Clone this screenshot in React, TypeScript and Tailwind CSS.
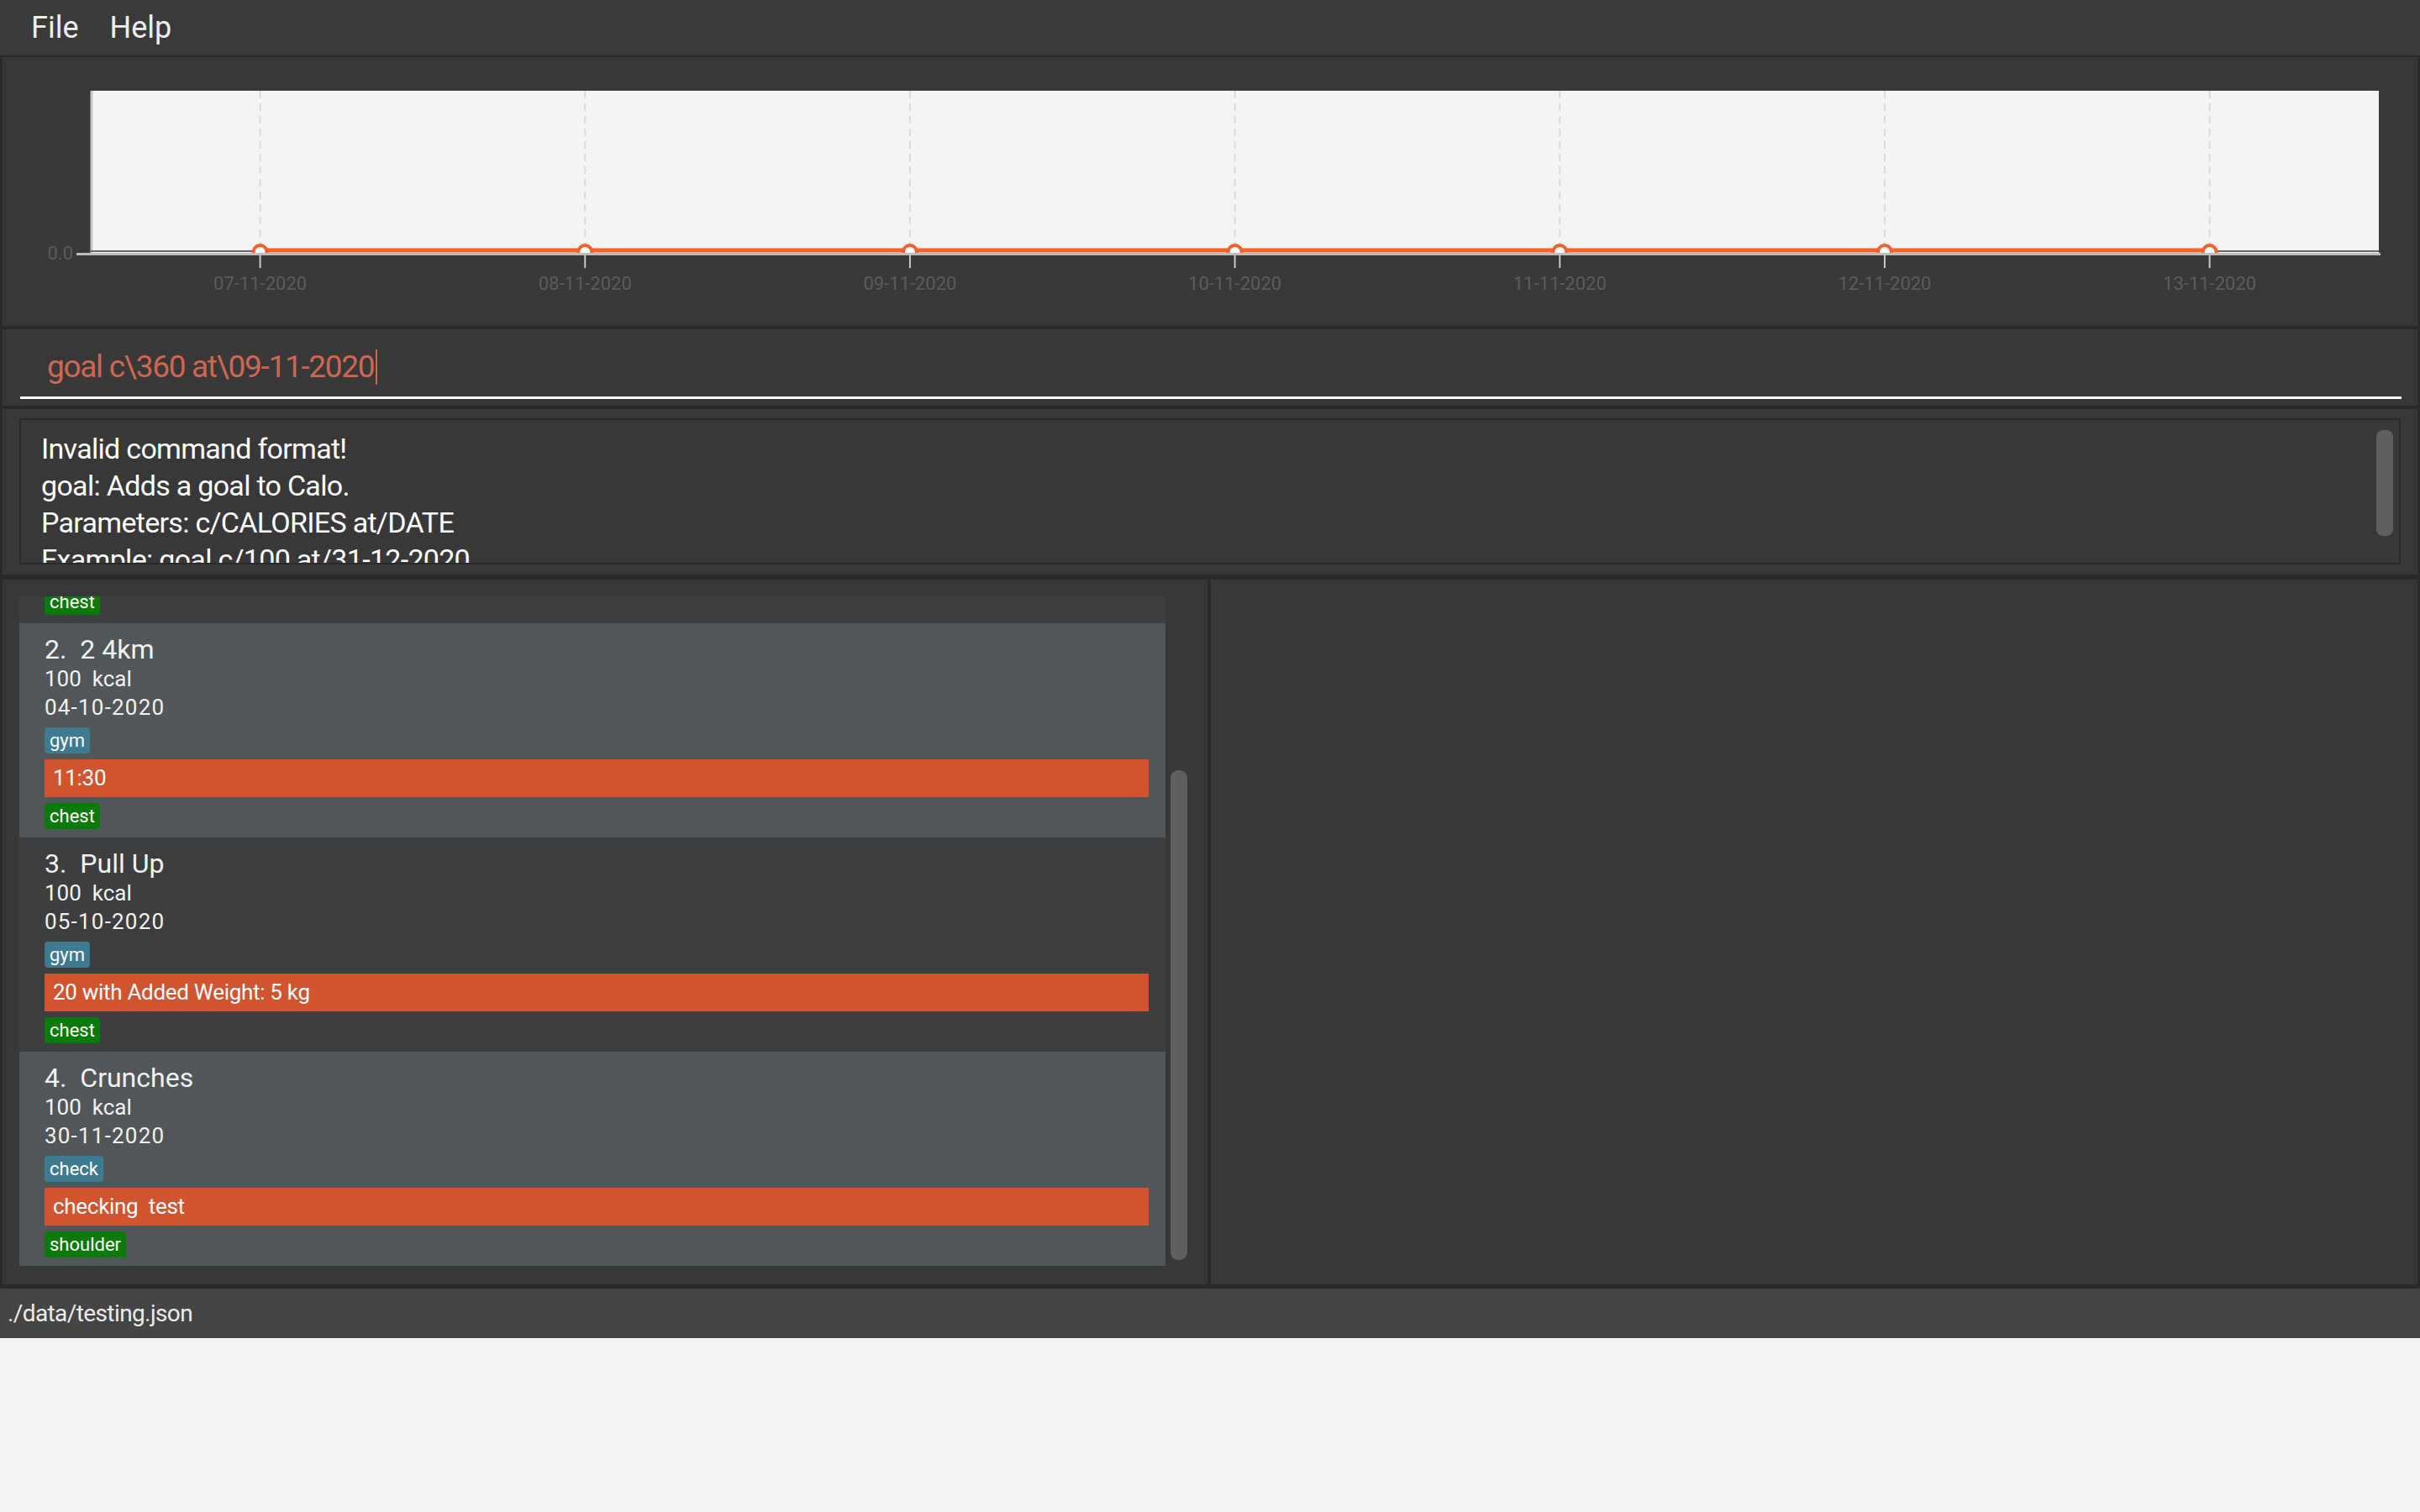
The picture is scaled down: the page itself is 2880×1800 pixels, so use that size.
import React from "react";

const FONT = { fontFamily: "Roboto, 'Noto Sans', 'Liberation Sans', sans-serif" };

type Item = {
  n: number;
  name: string;
  date: string;
  tag1: string;
  bar: string;
  tag2: string;
};

const items: Item[] = [
  { n: 1, name: "Bench Press", date: "03-10-2020", tag1: "gym", bar: "10:00", tag2: "chest" },
  { n: 2, name: "2 4km", date: "04-10-2020", tag1: "gym", bar: "11:30", tag2: "chest" },
  { n: 3, name: "Pull Up", date: "05-10-2020", tag1: "gym", bar: "20 with Added Weight: 5 kg", tag2: "chest" },
  { n: 4, name: "Crunches", date: "30-11-2020", tag1: "check", bar: "checking\u00a0\u00a0test", tag2: "shoulder" },
];

function Card({ item, even, first }: { item: Item; even: boolean; first?: boolean }) {
  return (
    <div
      className={`${even ? "bg-[#515658]" : "bg-[#3c3e3f]"} ${first ? "mt-[-223px]" : ""} h-[255px] shrink-0 pl-[30px] pr-[20px] pt-[13px] pb-[10px] flex flex-col text-[#f2f2f2]`}
    >
      <div className="text-[32px] leading-[36px] whitespace-pre">{`${item.n}.  ${item.name}`}</div>
      <div className="text-[26px] leading-[34px] whitespace-pre">{"100  kcal"}</div>
      <div className="text-[26px] leading-[34px] tracking-[1.2px]">{item.date}</div>
      <div className="mt-[7px] flex">
        <span className="bg-[#3e7b91] text-white text-[22px] leading-[27px] px-[6px] py-[2px] rounded-[4px]">{item.tag1}</span>
      </div>
      <div className="mt-[7px] h-[45px] bg-[#d0552f] flex items-center pl-[10px] text-[26px] tracking-[-0.3px] text-white whitespace-pre">
        {item.bar}
      </div>
      <div className="mt-[7px] flex">
        <span className="bg-[#0a7a0a] text-white text-[22px] leading-[27px] px-[6px] py-[2px] rounded-[4px]">{item.tag2}</span>
      </div>
    </div>
  );
}

function Chart() {
  const ticks = ["07-11-2020", "08-11-2020", "09-11-2020", "10-11-2020", "11-11-2020", "12-11-2020", "13-11-2020"];
  const x0 = 306.6;
  const step = 386.67;
  const xs = ticks.map((_, i) => x0 + i * step);
  return (
    <svg width="2874" height="320" viewBox="0 0 2874 320" className="block" style={FONT}>
      <defs>
        <clipPath id="plotclip">
          <rect x="105" y="40" width="2723" height="193" />
        </clipPath>
      </defs>
      <rect x="105" y="40" width="2723" height="194" fill="#f4f4f4" />
      {xs.map((x, i) => (
        <line key={`g${i}`} x1={x} y1="40" x2={x} y2="232" stroke="#d9d9d9" strokeWidth="2" strokeDasharray="9 6" />
      ))}
      <line x1="106" y1="40" x2="106" y2="234" stroke="#c8c8c8" strokeWidth="3" />
      <line x1="105" y1="231" x2="2828" y2="231" stroke="#6a6a6a" strokeWidth="2" />
      <line x1="88" y1="234.5" x2="2830" y2="234.5" stroke="#bdbdbd" strokeWidth="3" />
      <g clipPath="url(#plotclip)">
        <line x1={xs[0]} y1="230" x2={xs[6]} y2="230" stroke="#f3622d" strokeWidth="5" />
        {xs.map((x, i) => (
          <circle key={`c${i}`} cx={x} cy="232" r="8" fill="#ffffff" stroke="#f3622d" strokeWidth="4" />
        ))}
      </g>
      {xs.map((x, i) => (
        <line key={`t${i}`} x1={x} y1="236" x2={x} y2="251" stroke="#c8c8c8" strokeWidth="2" />
      ))}
      {xs.map((x, i) => (
        <text key={`l${i}`} x={x} y="277" fill="#5c5c5c" fontSize="22" textAnchor="middle">
          {ticks[i]}
        </text>
      ))}
      <text x="84" y="241" fill="#5c5c5c" fontSize="22" textAnchor="end">
        0.0
      </text>
    </svg>
  );
}

export default function App() {
  return (
    <div className="w-[2880px] h-[1800px] bg-[#f4f4f4] flex flex-col overflow-hidden" style={FONT}>
      {/* menu bar */}
      <div className="h-[66px] shrink-0 bg-[#3a3a3a] flex items-center pl-[37px] gap-[37px] text-[36px] text-[#eeeeee]">
        <span>File</span>
        <span>Help</span>
      </div>

      {/* main */}
      <div className="h-[1468px] shrink-0 bg-[#2a2a2a] pt-[2px] px-[3px] flex flex-col">
        {/* chart panel */}
        <div className="h-[320px] shrink-0 bg-[#383838] overflow-hidden">
          <Chart />
        </div>

        {/* command box */}
        <div className="mt-[4px] h-[91px] shrink-0 bg-[#383838] pt-[21px] pl-[21px] pr-[19px]">
          <div className="border-b-[3px] border-white h-[62px] pl-[32px]">
            <div className="text-[37px] leading-[48px] tracking-[-1.3px] text-[#d06651] flex items-center whitespace-pre">
              <span>{"goal c\\360 at\\09-11-2020"}</span>
              <span className="inline-block w-[2px] h-[42px] ml-[2px] bg-[#d06651]"></span>
            </div>
          </div>
        </div>

        {/* result display */}
        <div className="mt-[4px] h-[197px] shrink-0 bg-[#383838] pt-[11px] pl-[20px] pr-[20px]">
          <div className="h-[174px] border-2 border-[#2a2a2a] flex">
            <div className="flex-1 overflow-hidden pt-[12px] pl-[24px] text-[34px] leading-[44px] tracking-[-0.7px] text-white">
              <div>Invalid command format!</div>
              <div>goal: Adds a goal to Calo.</div>
              <div>Parameters: c/CALORIES at/DATE</div>
              <div>Example: goal c/100 at/31-12-2020</div>
            </div>
            <div className="w-[20px] mr-[7px] pt-[12px]">
              <div className="h-[126px] rounded-[8px] bg-[#5f5f5f]"></div>
            </div>
          </div>
        </div>

        {/* list row */}
        <div className="mt-[6px] h-[839px] shrink-0 flex gap-[4px]">
          <div className="w-[1434px] shrink-0 bg-[#383838] pt-[20px] pl-[20px] flex gap-[6px]">
            <div className="w-[1364px] h-[799px] overflow-hidden flex flex-col">
              {items.map((it, i) => (
                <Card key={it.n} item={it} even={i % 2 === 1} first={i === 0} />
              ))}
            </div>
            <div className="w-[20px]">
              <div className="mt-[207px] h-[583px] rounded-[9px] bg-[#5f5f5f]"></div>
            </div>
          </div>
          <div className="flex-1 bg-[#383838]"></div>
        </div>
      </div>

      {/* status bar */}
      <div className="h-[59px] shrink-0 bg-[#454545] flex items-center pl-[9px] text-[28px] tracking-[-0.6px] text-[#ececec]">
        ./data/testing.json
      </div>
    </div>
  );
}
